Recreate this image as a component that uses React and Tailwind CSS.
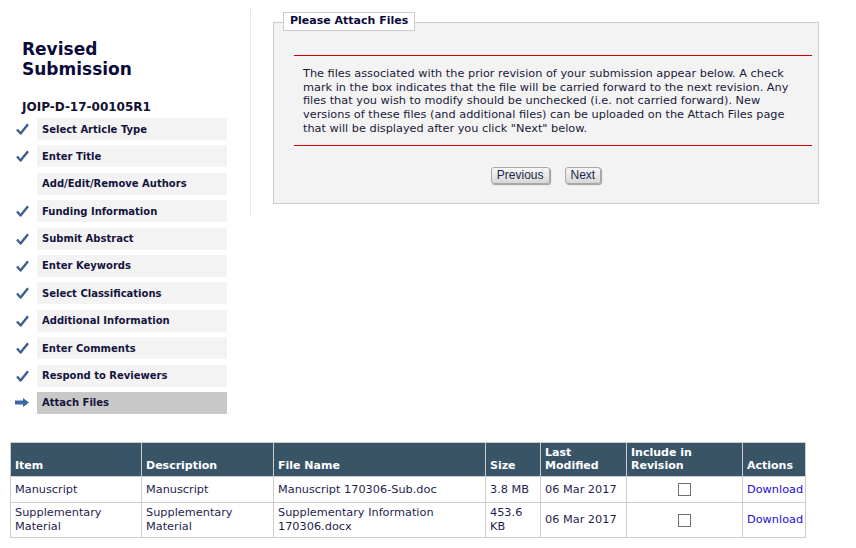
import React from 'react';

const steps = [
  { label: 'Select Article Type', done: true },
  { label: 'Enter Title', done: true },
  { label: 'Add/Edit/Remove Authors', done: false },
  { label: 'Funding Information', done: true },
  { label: 'Submit Abstract', done: true },
  { label: 'Enter Keywords', done: true },
  { label: 'Select Classifications', done: true },
  { label: 'Additional Information', done: true },
  { label: 'Enter Comments', done: true },
  { label: 'Respond to Reviewers', done: true },
  { label: 'Attach Files', current: true },
];

const files = [
  {
    item: ['Supplementary', 'Material'],
    description: ['Supplementary', 'Material'],
    fileName: ['Supplementary Information', '170306.docx'],
    size: ['453.6', 'KB'],
  },
];

function Check() {
  return (
    <svg width="13" height="12" viewBox="0 0 13 12">
      <path d="M1 6.5 L4.6 10.5 L12 1.2" fill="none" stroke="#3d5f8a" strokeWidth="2.4" strokeLinejoin="round" />
    </svg>
  );
}

function Arrow() {
  return (
    <svg width="14" height="9" viewBox="0 0 14 9">
      <path d="M0 2.6 H8 V0 L14 4.5 L8 9 V6.4 H0 Z" fill="#3a68a4" />
    </svg>
  );
}

function Sidebar() {
  return (
    <div className="w-[250px] shrink-0 pt-[31px]">
      <h1 className="pl-[22px] text-[17px] leading-[20px] font-bold text-[#0b0b3b]">
        Revised
        <br />
        Submission
      </h1>
      <p className="mt-[20px] pl-[22px] text-[12px] leading-[16px] font-bold text-[#111133]">JOIP-D-17-00105R1</p>
      <div className="mt-[3px] flex flex-col gap-[5.4px]">
        {steps.map((step) => (
          <div key={step.label} className="flex items-center h-[22px]">
            <div className="w-[37px] flex justify-center pl-[7px]">
              {step.done && <Check />}
              {step.current && <Arrow />}
            </div>
            <div
              className={`w-[190px] h-full flex items-center pl-[5px] text-[10px] font-bold text-[#14143c] ${
                step.current ? 'bg-[#c8c8c8]' : 'bg-[#f3f3f3]'
              }`}
            >
              {step.label}
            </div>
          </div>
        ))}
      </div>
    </div>
  );
}

function Panel() {
  return (
    <div className="border-l border-dotted border-[#d8d8d8] pl-[22px] pt-[14px] pb-[12px]">
      <div className="relative w-[546px] border border-[#cccccc] bg-[#f3f3f3] pt-[32px] pb-[19px] pl-[20px] pr-[6px]">
        <div className="absolute left-[9px] top-[-11px] border border-[#cccccc] bg-white px-[6px] h-[19px] flex items-center text-[11px] font-bold text-[#0b0b3b]">
          Please Attach Files
        </div>
        <div className="h-px bg-[#d00000]" />
        <p className="pl-[9px] pt-[11px] pb-[9px] text-[11.3px] leading-[13.7px] text-[#1a1a3a] whitespace-nowrap">
          The files associated with the prior revision of your submission appear below. A check
          <br />
          mark in the box indicates that the file will be carried forward to the next revision. Any
          <br />
          files that you wish to modify should be unchecked (i.e. not carried forward). New
          <br />
          versions of these files (and additional files) can be uploaded on the Attach Files page
          <br />
          that will be displayed after you click "Next" below.
        </p>
        <div className="h-px bg-[#d00000]" />
        <div className="mt-[21px] flex justify-center gap-[15px] pr-[14px]">
          {['Previous', 'Next'].map((b) => (
            <button
              key={b}
              type="button"
              className="h-[17px] px-[5px] rounded-[3px] border border-[#a8a8a8] bg-gradient-to-b from-[#f6f6f6] to-[#d8d8d8] shadow-[1px_1px_1px_rgba(0,0,0,0.35)] text-[12px] leading-[15px] text-[#1b2a4a]"
              style={{ fontFamily: '"Liberation Sans", Arial, sans-serif' }}
            >
              {b}
            </button>
          ))}
        </div>
      </div>
    </div>
  );
}

function Lines({ value }) {
  if (!Array.isArray(value)) return value;
  return value.map((v, i) => (
    <React.Fragment key={i}>
      {i > 0 && <br />}
      {v}
    </React.Fragment>
  ));
}

function FileTable() {
  const rows = [
    { item: 'Manuscript', description: 'Manuscript', fileName: 'Manuscript 170306-Sub.doc', size: '3.8 MB' },
    ...files,
  ];
  const th = 'border border-[#cccccc] px-[4px] pb-[3px] align-bottom text-left text-[11px] font-bold text-white';
  const td = 'border border-[#cccccc] px-[4px] py-[3px] align-middle text-[11.3px] text-[#1e1e4e]';
  return (
    <div className="mt-[28px] pl-[10px]">
      <table className="table-fixed border-collapse w-[795px] leading-[13.5px]">
        <colgroup>
          <col className="w-[131px]" />
          <col className="w-[132px]" />
          <col className="w-[212px]" />
          <col className="w-[55px]" />
          <col className="w-[86px]" />
          <col className="w-[116px]" />
          <col className="w-[63px]" />
        </colgroup>
        <thead>
          <tr className="bg-[#3a5467] h-[34px]">
            <th className={th}>Item</th>
            <th className={th}>Description</th>
            <th className={th}>File Name</th>
            <th className={th}>Size</th>
            <th className={th}>
              Last
              <br />
              Modified
            </th>
            <th className={th}>
              Include in
              <br />
              Revision
            </th>
            <th className={th}>Actions</th>
          </tr>
        </thead>
        <tbody>
          {rows.map((r, i) => (
            <tr key={i} className={i === 0 ? 'h-[26px]' : 'h-[35px]'}>
              <td className={td}><Lines value={r.item} /></td>
              <td className={td}><Lines value={r.description} /></td>
              <td className={td}><Lines value={r.fileName} /></td>
              <td className={td}><Lines value={r.size} /></td>
              <td className={td}>06 Mar 2017</td>
              <td className={`${td} text-center`}>
                <span className="inline-block align-middle w-[13px] h-[13px] border border-[#707070] bg-white" />
              </td>
              <td className={td}>
                <span className="text-[#1a0ddd]">Download</span>
              </td>
            </tr>
          ))}
        </tbody>
      </table>
    </div>
  );
}

export default function App() {
  return (
    <div className="w-[856px] h-[548px] bg-white overflow-hidden pt-[8px]" style={{ fontFamily: '"DejaVu Sans", Verdana, sans-serif' }}>
      <div className="flex items-start">
        <Sidebar />
        <Panel />
      </div>
      <FileTable />
    </div>
  );
}
